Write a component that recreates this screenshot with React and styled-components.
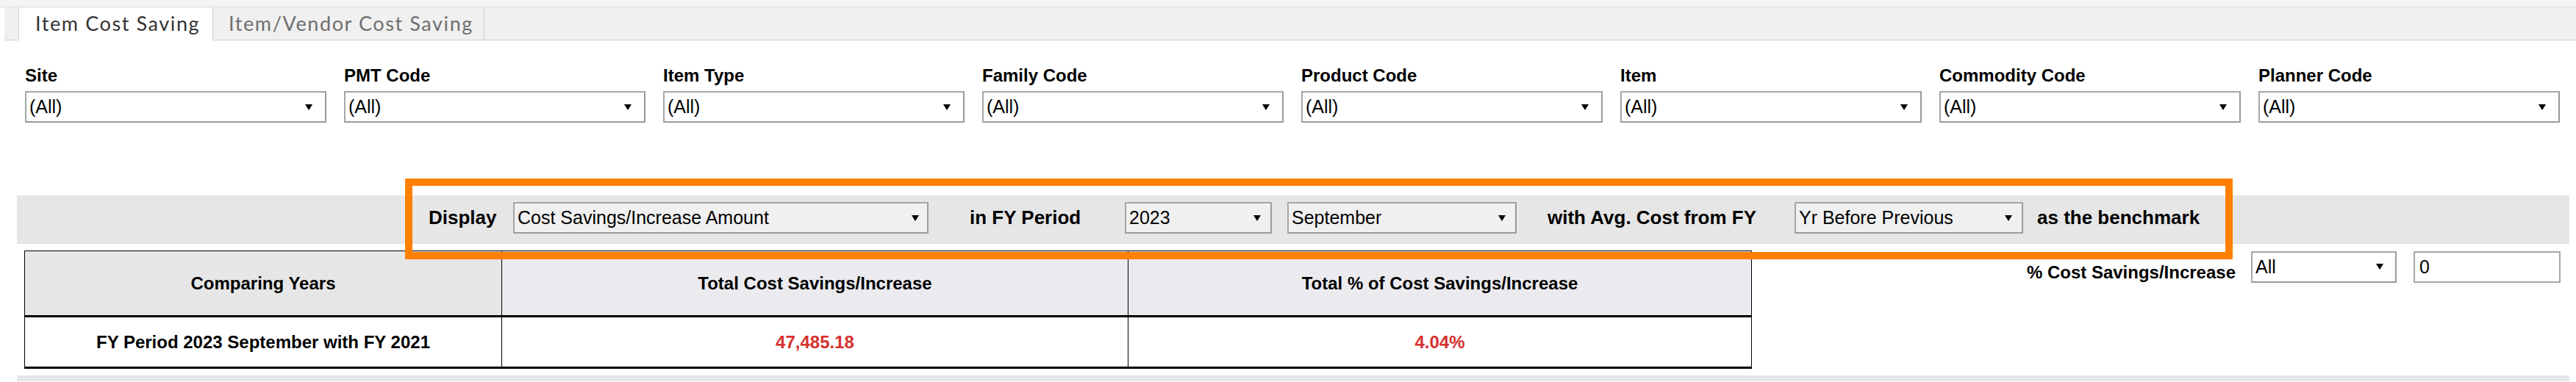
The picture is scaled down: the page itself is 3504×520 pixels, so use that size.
import React from "react";
import styled, { createGlobalStyle } from "styled-components";

const Global = createGlobalStyle`
  html, body { margin: 0; padding: 0; background: #ffffff; }
  body {
    font-family: "Liberation Sans", Arial, sans-serif;
    color: #000;
    width: 3504px;
    height: 520px;
    overflow: hidden;
  }
`;

const Page = styled.div`
  position: relative;
  width: 3504px;
  height: 520px;
  overflow: hidden;
`;

const TopStrip = styled.div`
  height: 9px;
  background: #f4f4f4;
  border-bottom: 1px solid #dcdcdc;
`;

const TabBar = styled.div`
  display: flex;
  height: 45px;
  margin-left: 6px;
`;

const TabSpacer = styled.div`
  box-sizing: border-box;
  width: ${(p) => p.$w}px;
  flex: ${(p) => (p.$grow ? 1 : "none")};
  background: #f0f0f0;
  border-bottom: 1px solid #cfcfcf;
`;

const Tab = styled.div`
  box-sizing: border-box;
  display: flex;
  align-items: center;
  height: 45px;
  width: ${(p) => p.$w}px;
  padding-left: ${(p) => p.$pl}px;
  padding-bottom: 2px;
  font-family: Lato, "Open Sans", sans-serif;
  font-size: 27px;
  letter-spacing: 1.6px;
  white-space: nowrap;
  color: ${(p) => (p.$active ? "#333333" : "#6e6e6e")};
  background: ${(p) => (p.$active ? "#ffffff" : "#f0f0f0")};
  border-left: 1px solid #cfcfcf;
  border-right: ${(p) => (p.$active ? "none" : "1px solid #cfcfcf")};
  border-bottom: 1px solid ${(p) => (p.$active ? "#ffffff" : "#cfcfcf")};
`;

const FilterRow = styled.div`
  display: grid;
  grid-template-columns: repeat(8, 410px);
  column-gap: 24px;
  padding: 34px 0 0 34px;
`;

const Filter = styled.div`
  display: flex;
  flex-direction: column;
`;

const FilterLabel = styled.div`
  font-size: 24px;
  font-weight: bold;
  line-height: 28px;
  height: 28px;
  margin-bottom: 7px;
  white-space: nowrap;
`;

const SelectBox = styled.div`
  box-sizing: border-box;
  display: flex;
  align-items: center;
  justify-content: space-between;
  width: ${(p) => p.$w}px;
  height: 43px;
  margin-left: ${(p) => p.$ml || 0}px;
  padding: 0 ${(p) => p.$pr || 14}px 0 4px;
  background: ${(p) => p.$bg || "#ffffff"};
  border: 2px solid #a6a6a6;
  border-right-color: #9a9a9a;
  border-bottom-color: #9a9a9a;
  font-size: 25px;
  white-space: nowrap;
  flex: none;
`;

const SelectText = styled.span`
  overflow: hidden;
`;

const Arrow = () => (
  <svg width="10" height="8" viewBox="0 0 10 8">
    <polygon points="0,0 10,0 5,8" fill="#000" />
  </svg>
);

const Select = ({ value, ...rest }) => (
  <SelectBox {...rest}>
    <SelectText>{value}</SelectText>
    <Arrow />
  </SelectBox>
);

const InputBox = styled.div`
  box-sizing: border-box;
  display: flex;
  align-items: center;
  width: ${(p) => p.$w}px;
  height: 43px;
  margin-left: ${(p) => p.$ml || 0}px;
  padding-left: 6px;
  background: #ffffff;
  border: 2px solid #a6a6a6;
  font-size: 25px;
`;

const DisplayBar = styled.div`
  box-sizing: border-box;
  display: flex;
  align-items: flex-start;
  height: 66px;
  margin: 99px 9px 0 23px;
  padding-top: 9px;
  background: #e6e6e6;
`;

const BarLabel = styled.div`
  flex: none;
  width: ${(p) => p.$w}px;
  margin-left: ${(p) => p.$ml}px;
  font-size: 26px;
  font-weight: bold;
  line-height: 43px;
  white-space: nowrap;
`;

const Lower = styled.div`
  display: flex;
  align-items: flex-start;
  margin-top: 9px;
  padding-left: 33px;
`;

const SummaryGrid = styled.div`
  display: grid;
  grid-template-columns: 649px 852px 848px;
  grid-template-rows: 90px 70px;
  border-top: 1px solid #000;
  border-left: 1px solid #000;
  flex: none;
`;

const Cell = styled.div`
  box-sizing: border-box;
  display: flex;
  align-items: center;
  justify-content: center;
  border-right: 1px solid #000;
  border-bottom: 3px solid #000;
  background: ${(p) => p.$bg || "#ffffff"};
  color: ${(p) => p.$color || "#000"};
  font-size: 24px;
  font-weight: bold;
  white-space: nowrap;
`;

const RightControls = styled.div`
  display: flex;
  align-items: center;
  margin-left: auto;
  margin-right: 21px;
`;

const ControlLabel = styled.div`
  font-size: 24px;
  font-weight: bold;
  white-space: nowrap;
  padding-top: 16px;
`;

const BottomBand = styled.div`
  height: 8px;
  margin: 9px 9px 0 23px;
  background: #e6e6e6;
`;

const Highlight = styled.div`
  position: absolute;
  left: 551px;
  top: 243px;
  width: 2486px;
  height: 110px;
  box-sizing: border-box;
  border: 10px solid #ff8000;
  pointer-events: none;
  z-index: 2;
`;

const filters = [
  "Site",
  "PMT Code",
  "Item Type",
  "Family Code",
  "Product Code",
  "Item",
  "Commodity Code",
  "Planner Code",
];

export default function App() {
  return (
    <Page>
      <Global />
      <TopStrip />
      <TabBar>
        <TabSpacer $w={19} />
        <Tab $active $w={264} $pl={22}>
          Item Cost Saving
        </Tab>
        <Tab $w={370} $pl={21}>
          Item/Vendor Cost Saving
        </Tab>
        <TabSpacer $grow />
      </TabBar>

      <FilterRow>
        {filters.map((f) => (
          <Filter key={f}>
            <FilterLabel>{f}</FilterLabel>
            <Select $w={410} value="(All)" $pr={17} />
          </Filter>
        ))}
      </FilterRow>

      <DisplayBar>
        <BarLabel $ml={560} $w={94}>Display</BarLabel>
        <Select $ml={21} $w={565} $bg="#f0f0f0" $pr={11} value="Cost Savings/Increase Amount" />
        <BarLabel $ml={56} $w={153}>in FY Period</BarLabel>
        <Select $ml={58} $w={200} $bg="#f0f0f0" $pr={13} value="2023" />
        <Select $ml={21} $w={312} $bg="#f0f0f0" $pr={13} value="September" />
        <BarLabel $ml={42} $w={288}>with Avg. Cost from FY</BarLabel>
        <Select $ml={48} $w={311} $bg="#f0f0f0" $pr={13} value="Yr Before Previous" />
        <BarLabel $ml={19} $w={226}>as the benchmark</BarLabel>
      </DisplayBar>

      <Lower>
        <SummaryGrid>
          <Cell $bg="#e6e6e6">Comparing Years</Cell>
          <Cell $bg="#ebebef">Total Cost Savings/Increase</Cell>
          <Cell $bg="#ebebef">Total % of Cost Savings/Increase</Cell>
          <Cell>FY Period 2023 September with FY 2021</Cell>
          <Cell $color="#d6302e">47,485.18</Cell>
          <Cell $color="#d6302e">4.04%</Cell>
        </SummaryGrid>
        <RightControls>
          <ControlLabel>% Cost Savings/Increase</ControlLabel>
          <Select $ml={21} $w={198} $pr={16} value="All" />
          <InputBox $ml={23} $w={200}>0</InputBox>
        </RightControls>
      </Lower>

      <BottomBand />
      <Highlight />
    </Page>
  );
}
